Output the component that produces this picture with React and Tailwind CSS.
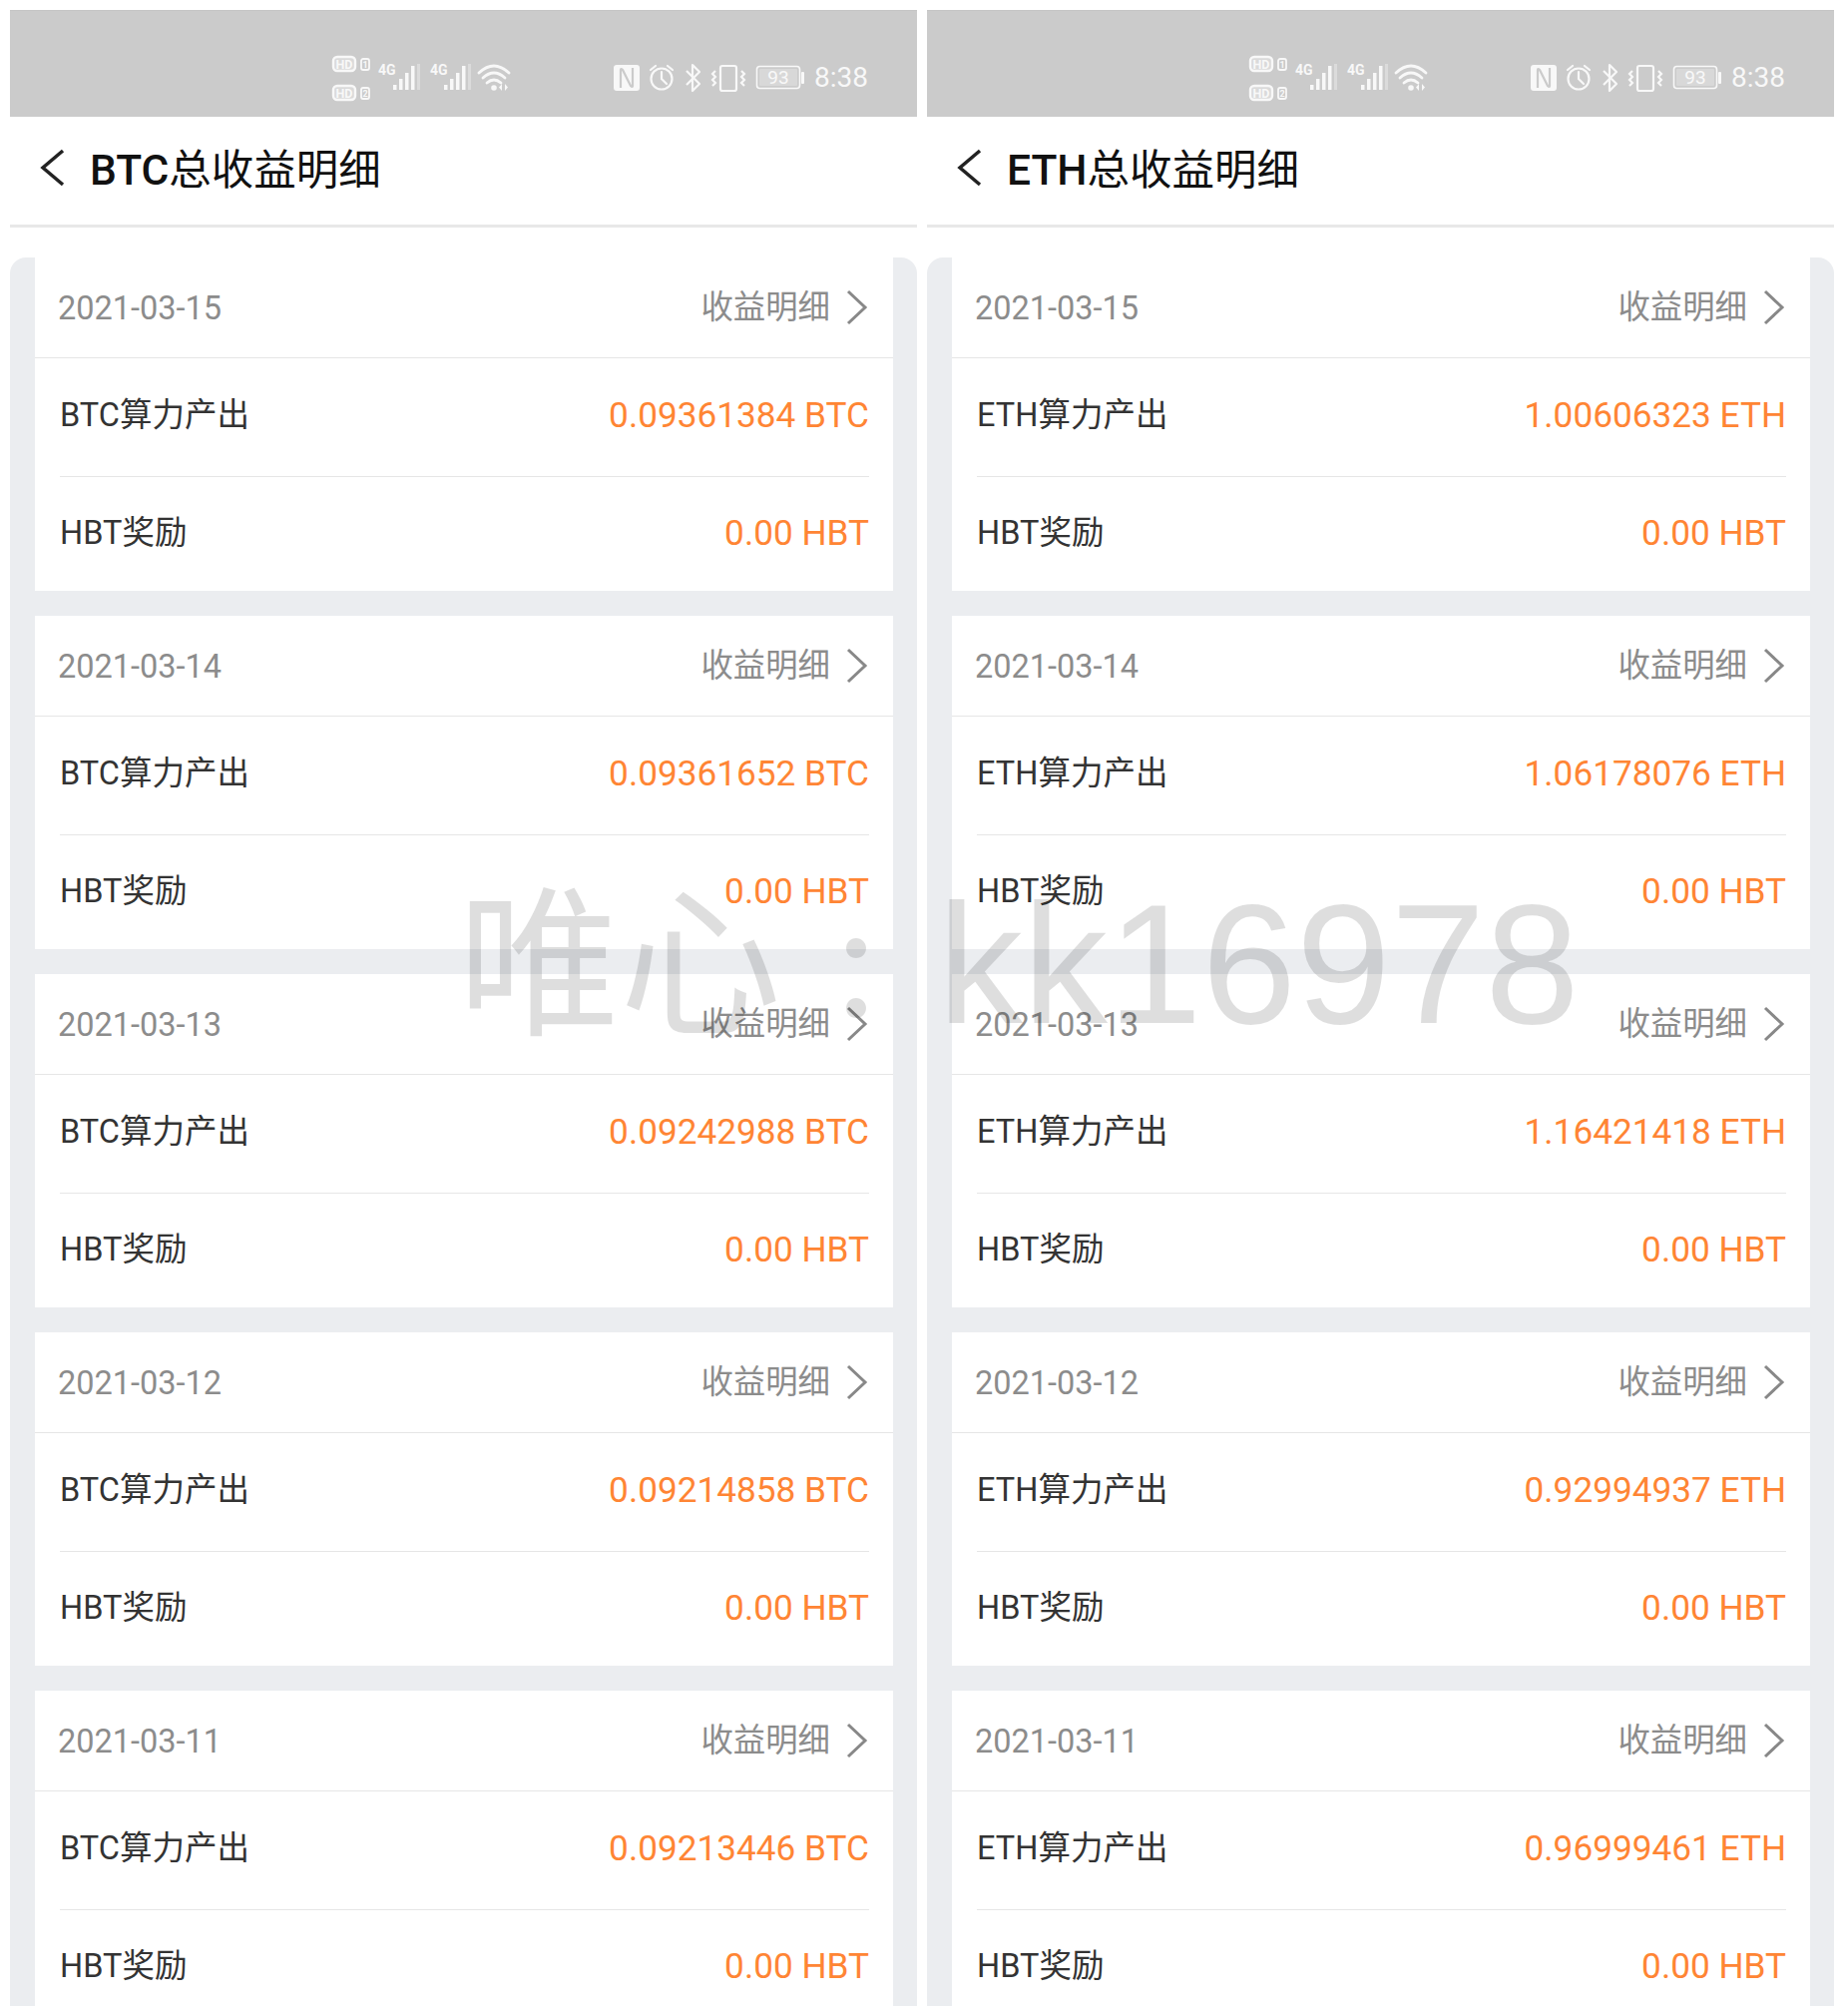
const FONT = 'font-["Roboto","Noto_Sans_CJK_SC",sans-serif]';

const panels = [
  {
    coin: 'BTC',
    days: [
      ['2021-03-15', '0.09361384'],
      ['2021-03-14', '0.09361652'],
      ['2021-03-13', '0.09242988'],
      ['2021-03-12', '0.09214858'],
      ['2021-03-11', '0.09213446'],
    ],
  },
  {
    coin: 'ETH',
    days: [
      ['2021-03-15', '1.00606323'],
      ['2021-03-14', '1.06178076'],
      ['2021-03-13', '1.16421418'],
      ['2021-03-12', '0.92994937'],
      ['2021-03-11', '0.96999461'],
    ],
  },
];

function SignalBars({ x }) {
  return (
    <g fill="#f8f8f8">
      <rect x={x} y="30" width="3.5" height="5" />
      <rect x={x + 6} y="24" width="3.5" height="11" />
      <rect x={x + 12} y="18" width="3.5" height="17" />
      <rect x={x + 18} y="11" width="3.5" height="24" />
      <rect x={x + 24} y="9" width="3" height="26" opacity="0.35" />
    </g>
  );
}

function NetworkIcons() {
  return (
    <svg width="182" height="48" viewBox="0 0 182 48" className="shrink-0">
      <g fill="#f8f8f8" opacity="0.35">
        <rect x="2" y="2" width="22" height="14" rx="4" />
        <rect x="2" y="31" width="22" height="14" rx="4" />
      </g>
      <g fill="none" stroke="#f8f8f8" strokeWidth="2.4">
        <rect x="2" y="2" width="22" height="14" rx="4" />
        <rect x="2" y="31" width="22" height="14" rx="4" />
        <rect x="30" y="4" width="8" height="11" rx="2" strokeWidth="1.8" />
        <rect x="30" y="33" width="8" height="11" rx="2" strokeWidth="1.8" />
      </g>
      <g fill="#f8f8f8" fontFamily="Roboto" fontWeight="700">
        <text x="4.5" y="13.5" fontSize="12.5">HD</text>
        <text x="4.5" y="42.5" fontSize="12.5">HD</text>
        <text x="31.5" y="13" fontSize="9">1</text>
        <text x="31.5" y="42" fontSize="9">2</text>
        <text x="47" y="20" fontSize="14">4G</text>
        <text x="99" y="20" fontSize="14">4G</text>
      </g>
      <SignalBars x={62} />
      <SignalBars x={113} />
      <g fill="none" stroke="#f8f8f8" strokeWidth="2.8" strokeLinecap="round">
        <path d="M148 18 Q163 4 178 18" />
        <path d="M152 23 Q163 13 174 23" />
        <path d="M156 28 Q163 22 170 28" />
      </g>
      <circle cx="163" cy="33" r="2.8" fill="#f8f8f8" />
      <path d="M171 29 L171 36 L168 32.5 Z M174 29 L174 36 L177 32.5 Z" fill="#f8f8f8" />
    </svg>
  );
}

function SystemIcons() {
  return (
    <svg width="194" height="30" viewBox="0 0 194 30" className="shrink-0">
      {/* nfc */}
      <rect x="1" y="2" width="26" height="26" rx="3" fill="#f8f8f8" />
      <path d="M8 25 V7 Q8 5 10 7 L18 23 Q20 25 20 23 V5" fill="none" stroke="#cbcbcb" strokeWidth="2.2" />
      {/* alarm */}
      <g fill="none" stroke="#f8f8f8" strokeWidth="2.2" strokeLinecap="round">
        <circle cx="49" cy="16" r="10.5" />
        <path d="M49 9 V16 L54 21" />
        <path d="M38 7 L43 3" />
        <path d="M60 7 L55 3" />
      </g>
      {/* bluetooth */}
      <path
        d="M74 8 L87 21 L80 28 V2 L87 9 L74 22"
        fill="none"
        stroke="#f8f8f8"
        strokeWidth="2.2"
        strokeLinejoin="round"
      />
      {/* vibrate */}
      <g fill="none" stroke="#f8f8f8" strokeWidth="2.2">
        <rect x="108" y="3" width="16" height="25" rx="2" />
        <path d="M103 8 L100 11 L103 14 L100 17 L103 20 L100 23" />
        <path d="M129 8 L132 11 L129 14 L132 17 L129 20 L132 23" />
      </g>
      {/* battery */}
      <rect x="144.5" y="3.5" width="43" height="22" rx="3" fill="none" stroke="#f8f8f8" strokeWidth="1.6" />
      <rect x="147" y="6" width="38" height="17" rx="1" fill="#f8f8f8" opacity="0.3" />
      <rect x="189" y="9" width="3" height="12" rx="1" fill="#f8f8f8" />
      <text x="166" y="21" textAnchor="middle" fontFamily="Roboto" fontSize="19" fill="#f8f8f8">93</text>
    </svg>
  );
}

function StatusBar() {
  return (
    <div className="h-[107px] shrink-0 bg-[#cbcbcb] border-t border-[#c4c4c4] flex items-start pt-[44px] pl-[322px]">
      <NetworkIcons />
      <div className="ml-[100px] mt-[8px]">
        <SystemIcons />
      </div>
      <span className="ml-[8px] mt-[9px] text-[28px] leading-[28px] text-[#f8f8f8]">8:38</span>
    </div>
  );
}

function DayCard({ coin, date, amount }) {
  return (
    <div className="bg-white shrink-0">
      <div className="h-[101px] border-b border-[#e6e6e6] flex items-center justify-between pl-[23px] pr-[24px]">
        <span className="pt-[2px] text-[32.5px] text-[#8c8c8c]">{date}</span>
        <div className="flex items-center">
          <span className="text-[32.4px] text-[#8c8c8c]">收益明细</span>
          <svg width="24" height="36" viewBox="0 0 24 36" className="ml-[15px]">
            <path d="M3 2 L20 18 L3 34" fill="none" stroke="#888" strokeWidth="3" />
          </svg>
        </div>
      </div>
      <div className="ml-[25px] mr-[24px]">
        <div className="h-[119px] border-b border-[#e6e6e6] flex items-center justify-between pb-[3px]">
          <span className="text-[32.5px] text-[#333]">{coin}算力产出</span>
          <span className="text-[35.2px] text-[#ff8534]">{amount} {coin}</span>
        </div>
        <div className="h-[114px] flex items-center justify-between pb-[2px]">
          <span className="text-[32.5px] text-[#333]">HBT奖励</span>
          <span className="text-[35.2px] text-[#ff8534]">0.00 HBT</span>
        </div>
      </div>
    </div>
  );
}

function Panel({ coin, days }) {
  return (
    <div className="flex-1 min-w-0 flex flex-col overflow-hidden">
      <StatusBar />
      <div className="h-[111px] shrink-0 border-b-[3px] border-[#e8e8e8] flex items-center pl-[29px]">
        <svg width="26" height="38" viewBox="0 0 26 38" className="mb-[6px]">
          <path d="M24 2 L4 19 L24 36" fill="none" stroke="#222" strokeWidth="3.5" />
        </svg>
        <h1 className="ml-[25px] text-[42.5px] text-[#111]">
          <span className="font-medium">{coin}</span>总收益明细
        </h1>
      </div>
      <div className="mt-[30px] flex-1 min-h-0 overflow-hidden rounded-t-[16px] bg-[#ebedf0] pl-[25px] pr-[24px] flex flex-col gap-[25px]">
        {days.map(([date, amount]) => (
          <DayCard key={date} coin={coin} date={date} amount={amount} />
        ))}
      </div>
    </div>
  );
}

export default function App() {
  return (
    <div className={`relative w-[1848px] h-[2020px] overflow-hidden bg-white p-[10px] flex gap-[10px] ${FONT}`}>
      {panels.map(p => (
        <Panel key={p.coin} coin={p.coin} days={p.days} />
      ))}
      {/* watermark */}
      <div className='absolute left-[459px] top-[863px] flex items-baseline text-[170px] leading-[200px] whitespace-nowrap text-black/[0.13] pointer-events-none font-["Liberation_Sans","Noto_Sans_CJK_SC",sans-serif]'>
        <span className="text-[162px]">唯心</span>
        <span className='relative -top-[6px] ml-[55px] text-[160px] font-["Lato"]'>:</span>
        <span className="ml-[62px]">kk16978</span>
      </div>
    </div>
  );
}
